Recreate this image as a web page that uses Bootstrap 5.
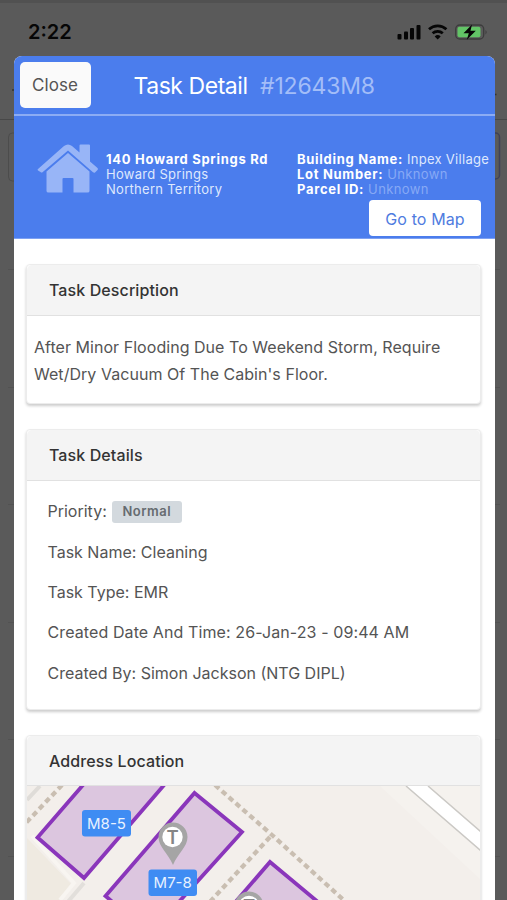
<!DOCTYPE html>
<html lang="en">
<head>
<meta charset="utf-8">
<meta name="viewport" content="width=device-width, initial-scale=1">
<title>Task Detail</title>
<link href="https://cdn.jsdelivr.net/npm/bootstrap@5.3.0/dist/css/bootstrap.min.css" rel="stylesheet">
<style>
body{font-family:Inter,"Liberation Sans",sans-serif;background:#5a5a5a;color:#545454;height:900px;overflow:hidden;font-size:16px}
.page-behind{z-index:0}
.status-strip{height:56px;padding:20px 19px 0 28px;color:#060606}
.clock{font-size:20px;font-weight:600;letter-spacing:0;line-height:24px}
.sheet{width:481px;height:844px;margin-left:13.5px;border-radius:8px 8px 0 0;background:#fff}
.sheet-top{height:58px;background:#4b7ded;padding:0 6px}
.btn-close-sheet{width:71px;height:46px;background:#fafafa;color:#555;font-size:17px;letter-spacing:.1px;border-radius:5px;padding:2px 0 0;border:0}
.sheet-title{font-size:23px;line-height:30px;color:#fff;margin-left:43px;padding-top:2px;gap:12.5px}
.sheet-title .name{letter-spacing:-.45px}
.task-no{color:#a3bdf8;letter-spacing:-.2px}
.info-band{height:125px;background:#4b7ded;border-top:2px solid #8cacf4;border-bottom:1px solid #7ea1f2}
.house{margin:27px 0 0 23.5px}
.addr{font-size:13px;line-height:15px;color:#dfe8fd;letter-spacing:.28px}
.addr b{font-weight:700;color:#fff;letter-spacing:.7px}
.addr .unk{color:#87a9f5;letter-spacing:.36px}
.street{width:191px;margin:36px 0 0 7px}
.build{margin-top:36px}
.btn-map{width:112px;height:36px;margin:3px 0 0 72px;background:#fff;color:#4f7ce0;font-size:16px;letter-spacing:.1px;border:0;border-radius:4px;padding:2px 0 0}
.sheet-body{padding:25px 13.5px 0 12.5px}
.panel{border:1px solid #ececec;border-radius:4px;box-shadow:0 2px 3px rgba(0,0,0,.2);overflow:hidden;background:#fff}
.panel-desc{height:140px}
.panel-facts{height:281px;margin-top:25px}
.panel-map{height:204px;margin-top:25px}
.panel .card-header{height:51px;background:#f4f4f4;border-bottom:1px solid #e1e1e1;padding:0 0 1px 22px;color:#333;font-weight:500;font-size:16px;letter-spacing:.1px}
.panel-map .card-header{height:50px;padding:0 0 0 22px}
.desc{font-size:16px;line-height:27px;padding:18px 7px 14px;letter-spacing:.04px}
.facts{padding:10px 20px 15px 20.5px;font-size:16px;letter-spacing:0}
.facts>div{height:40.4px}
.facts .stamp{letter-spacing:.1px}
.prio{width:70px;height:22px;margin-left:5px;position:relative;top:1px;background:#d3d9de;color:#666b70;font-size:13px;border-radius:3px;font-weight:600;letter-spacing:.5px}
</style>
<script src="https://cdn.jsdelivr.net/npm/bootstrap@5.3.0/dist/js/bootstrap.bundle.min.js"></script>
</head>
<body>
<svg class="page-behind position-absolute top-0 start-0" width="507" height="900" fill="none" aria-hidden="true">
  <path d="M0 0H507V3H0Z" fill="#515151"/>
  <path d="M0 119.500H507" stroke="#484848"/>
  <path d="M8 269.500H500M8 387.500H500M8 504.500H500M8 622.500H500M8 739.500H500M8 856.500H500" stroke="#525252"/>
  <rect x="8.500" y="133" width="60" height="48" rx="4" stroke="#4c4c4c"/>
  <rect x="430" y="133" width="69.500" height="46" rx="4" stroke="#3f4158" stroke-width="1.500"/>
  <path d="M12 90h2M495 94.500h1.500" stroke="#333" stroke-width="1.500"/>
</svg>
<header class="status-strip position-relative d-flex justify-content-between">
  <div class="clock">2:22</div>
  <svg width="92" height="24" viewBox="396 20 92 24" aria-hidden="true">
    <g fill="#060606">
      <rect x="397.500" y="34" width="4" height="5.500" rx="1"/><rect x="404" y="31.500" width="4" height="8" rx="1"/><rect x="410" y="28" width="4" height="11.500" rx="1"/><rect x="416.500" y="25" width="4" height="14.500" rx="1"/>
      <path d="M437.700 39.500l-3-3a4.300 4.300 0 0 1 6 0z"/>
    </g>
    <path d="M429 29.300a12.600 12.600 0 0 1 17.400 0M432.600 33.300a7.600 7.600 0 0 1 10.200 0" fill="none" stroke="#060606" stroke-width="2.700"/>
    <rect x="455.700" y="25" width="28" height="14" rx="4" fill="none" stroke="#3c3c3c" stroke-width="1.300"/>
    <path d="M485.500 30q2.400 2 0 4.500z" fill="#3c3c3c"/>
    <rect x="457.500" y="26.700" width="23" height="10.600" rx="2" fill="#62c466"/>
    <path d="M472 24.500l-8.500 8.800h5.300l-2 6.500 9-9h-5.300z" fill="#060606"/>
  </svg>
</header>
<main class="sheet position-relative overflow-hidden">
  <div class="sheet-top d-flex align-items-center">
    <button class="btn btn-close-sheet" type="button">Close</button>
    <h1 class="sheet-title fw-normal mb-0 d-flex"><span class="name">Task Detail</span><span class="task-no">#12643M8</span></h1>
  </div>
  <section class="info-band d-flex">
    <svg class="house flex-shrink-0" width="62" height="50" viewBox="37 142 62 50" fill="#98b5f7" aria-label="House">
      <path d="M38 168L64 145Q68 142 72 145L79.500 151.500V144.500Q79.500 143.500 80.500 143.500H89Q90 143.500 90 144.500V160.500L97.500 167Q98.500 168 97.500 169L95 171.500Q94 172 93 171.200L68 149.500L42.500 171.200Q41.500 172 40.500 171L38 169.500Q37 168.500 38 168Z"/>
      <path d="M68 152L89.500 170.500V190Q89.500 191.500 87.500 191.500H73.500V178Q73.500 177 72.500 177H63.500Q62.500 177 62.500 178V191.500H48.500Q46.500 191.500 46.500 190V170.500Z"/>
    </svg>
    <div class="addr street"><b>140 Howard Springs Rd</b><br>Howard Springs<br>Northern Territory</div>
    <div class="build d-flex flex-column">
      <div class="addr text-nowrap"><b>Building Name:</b> Inpex Village<br><b>Lot Number:</b> <span class="unk">Unknown</span><br><b>Parcel ID:</b> <span class="unk">Unknown</span></div>
      <button class="btn btn-map" type="button">Go to Map</button>
    </div>
  </section>
  <div class="sheet-body d-flex flex-column">
    <section class="card panel panel-desc">
      <div class="card-header d-flex align-items-center">Task Description</div>
      <div class="desc">After Minor Flooding Due To Weekend Storm, Require Wet/Dry Vacuum Of The Cabin's Floor.</div>
    </section>
    <section class="card panel panel-facts">
      <div class="card-header d-flex align-items-center">Task Details</div>
      <div class="facts">
        <div class="d-flex align-items-center">Priority: <span class="prio d-inline-flex align-items-center justify-content-center">Normal</span></div>
        <div class="d-flex align-items-center">Task Name: Cleaning</div>
        <div class="d-flex align-items-center">Task Type: EMR</div>
        <div class="d-flex align-items-center stamp">Created Date And Time: 26-Jan-23 - 09:44 AM</div>
        <div class="d-flex align-items-center">Created By: Simon Jackson (NTG DIPL)</div>
      </div>
    </section>
    <section class="card panel panel-map">
      <div class="card-header flex-shrink-0 d-flex align-items-center">Address Location</div>
      <svg class="flex-shrink-0" width="454" height="150" viewBox="27 786 454 150" aria-label="Map">
        <rect x="27" y="786" width="454" height="150" fill="#f3efeb"/>
        <path d="M27 838L72 885L60 900H27Z" fill="#efeae1"/>
        <path d="M380 786L481 880V786Z" fill="#f5f2ee"/>
        <path d="M27 800L40 786" stroke="#dfdcd8" stroke-width="4"/>
        <path d="M66 904L84 883" stroke="#e2dfdb" stroke-width="4"/>
        <path d="M32 836L74 883L60 900" stroke="#f8f5f1" stroke-width="4" fill="none"/>
        <path d="M406 786L487 856V837L428 786Z" fill="#fff"/>
        <path d="M406 786L487 856M428 786L487 837" stroke="#cbc9c5" stroke-width="1.500"/>
        <g stroke="#c9beb1" stroke-width="4.300" stroke-dasharray="5.500 3.700" fill="none">
          <path d="M62 785L24 825"/><path d="M215 785L272 835L348 904"/><path d="M270 837L208 904"/>
        </g>
        <g fill="#dcc6df" stroke="#8a36bb" stroke-width="3.800">
          <path d="M96 770L37.500 837.500L84 878L177 770"/>
          <path d="M194.500 793L242 832L150 934L105.500 896Z"/>
          <path d="M270 862L330 912V940H210L232 906Z"/>
        </g>
        <g fill="#a5a5a5">
          <path d="M173 865C168 853 158.500 847 158.500 837a14.500 14.500 0 0 1 29 0C187.500 847 178 853 173 865Z"/>
          <circle cx="249" cy="906" r="14.500"/>
        </g>
        <circle cx="172.500" cy="837" r="10.200" fill="#fff"/><circle cx="249" cy="906" r="10.200" fill="#fff"/>
        <g font-family="Inter,'Liberation Sans',sans-serif" text-anchor="middle">
          <text x="172.500" y="843.500" font-size="18.500" font-weight="600" fill="#858585">T</text>
          <text x="249" y="912.500" font-size="18.500" font-weight="600" fill="#858585">T</text>
          <rect x="82" y="810" width="49" height="26.500" rx="3" fill="#3f8cf3"/>
          <rect x="148.500" y="869.500" width="48.500" height="26.500" rx="3" fill="#3f8cf3"/>
          <text x="106.500" y="829" font-size="15" fill="#e9f2ff">M8-5</text>
          <text x="172.700" y="888" font-size="15" fill="#e9f2ff">M7-8</text>
        </g>
      </svg>
    </section>
  </div>
</main>
</body>
</html>
